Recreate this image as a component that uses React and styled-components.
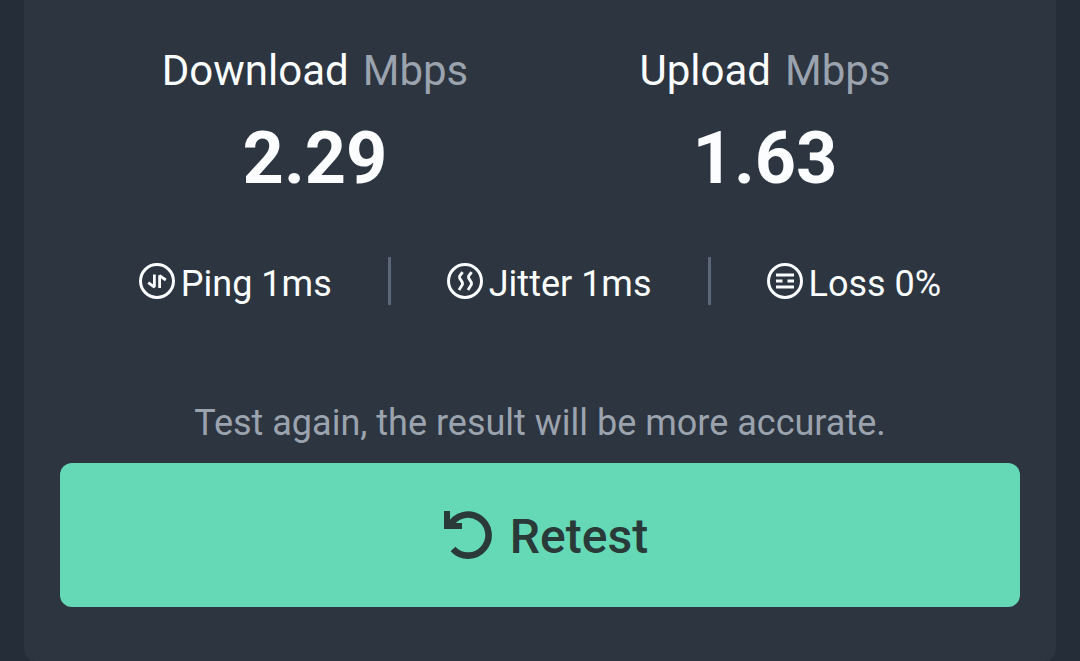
import React from "react";
import styled, { createGlobalStyle } from "styled-components";

const GlobalStyle = createGlobalStyle`
  *, *::before, *::after { box-sizing: border-box; }
  body {
    margin: 0;
    background: #252d39;
    color: #fbfdff;
    font-family: Roboto, "Liberation Sans", sans-serif;
  }
`;

const Page = styled.main`
  padding: 0 24px;
`;

const Card = styled.section`
  display: flex;
  flex-direction: column;
  padding: 46px 36px 54px;
  border-radius: 0 0 12px 12px;
  background: #2d3540;
`;

const Speeds = styled.div`
  display: grid;
  grid-template-columns: 1fr 1fr;
  padding: 0 30px;
`;

const Speed = styled.div`
  display: flex;
  flex-direction: column;
  align-items: center;
  gap: 13px;
`;

const SpeedLabel = styled.div`
  display: flex;
  gap: 14px;
  font-size: 42px;
  line-height: 50px;
  white-space: nowrap;
`;

const Unit = styled.span`
  color: #9ba3ae;
`;

const SpeedValue = styled.div`
  font-size: 72px;
  line-height: 100px;
  font-weight: 700;
`;

const Stats = styled.div`
  display: flex;
  justify-content: center;
  align-items: center;
  gap: 56px;
  margin-top: 47px;
`;

const Stat = styled.div`
  display: flex;
  align-items: center;
  gap: 6px;
  white-space: nowrap;
`;

const StatText = styled.span`
  padding-top: 6px;
  font-size: 36px;
  line-height: 44px;
`;

const Divider = styled.span`
  width: 3px;
  height: 48px;
  background: #5a6578;
`;

const StatIcon = styled.svg`
  flex: none;
  width: 36px;
  height: 36px;
  fill: none;
  stroke: currentColor;
  stroke-width: 3;
`;

const Hint = styled.p`
  margin: 95px 0 18px;
  color: #9ba3ae;
  font-size: 36px;
  line-height: 44px;
  text-align: center;
`;

const RetestButton = styled.button`
  display: flex;
  justify-content: center;
  align-items: center;
  gap: 18px;
  width: 100%;
  height: 144px;
  padding: 0 0 0 12px;
  border: 0;
  border-radius: 12px;
  background: #65d8b6;
  color: #293a39;
  font-family: inherit;
  font-size: 48px;
  font-weight: 500;
  line-height: 56px;
  cursor: pointer;
`;

const RetestText = styled.span`
  padding-top: 4px;
`;

const RetestIcon = styled.svg`
  flex: none;
  width: 48px;
  height: 48px;
`;

function PingIcon() {
  return (
    <StatIcon viewBox="0 0 36 36" aria-hidden="true">
      <circle cx="18" cy="18" r="16.5" />
      <path
        strokeWidth="2.8"
        strokeLinejoin="bevel"
        d="M9.2 19.6L15.4 24V11.6M20.6 25V12.6L26.8 17"
      />
    </StatIcon>
  );
}

function JitterIcon() {
  return (
    <StatIcon viewBox="0 0 36 36" aria-hidden="true">
      <circle cx="18" cy="18" r="16.5" />
      <path
        strokeWidth="2.8"
        strokeLinejoin="round"
        d="M15.6 9.2L12.6 13.2V15L15.4 19.6V21.6L12 27M24.6 9.2L21.6 13.2V15L24.4 19.6V21.6L21 27"
      />
    </StatIcon>
  );
}

function LossIcon() {
  return (
    <StatIcon viewBox="0 0 36 36" aria-hidden="true">
      <circle cx="18" cy="18" r="16.5" />
      <path strokeWidth="2.8" d="M9 12H27M9 18H15.5M20.5 18H27M9 24H27" />
    </StatIcon>
  );
}

function SpeedBlock({ label, value }) {
  return (
    <Speed>
      <SpeedLabel>
        <span>{label}</span>
        <Unit>Mbps</Unit>
      </SpeedLabel>
      <SpeedValue>{value}</SpeedValue>
    </Speed>
  );
}

export default function App() {
  return (
    <>
      <GlobalStyle />
      <Page>
        <Card>
          <Speeds>
            <SpeedBlock label="Download" value="2.29" />
            <SpeedBlock label="Upload" value="1.63" />
          </Speeds>
          <Stats>
            <Stat>
              <PingIcon />
              <StatText>Ping 1ms</StatText>
            </Stat>
            <Divider />
            <Stat>
              <JitterIcon />
              <StatText>Jitter 1ms</StatText>
            </Stat>
            <Divider />
            <Stat>
              <LossIcon />
              <StatText>Loss 0%</StatText>
            </Stat>
          </Stats>
          <Hint>Test again, the result will be more accurate.</Hint>
          <RetestButton type="button">
            <RetestIcon viewBox="0 0 48 48" aria-hidden="true">
              <path
                d="M5.7 15A20.5 20.5 0 1 1 9 38"
                fill="none"
                stroke="currentColor"
                strokeWidth="6.6"
              />
              <path d="M0 0H6V12H18V18H0Z" fill="currentColor" />
            </RetestIcon>
            <RetestText>Retest</RetestText>
          </RetestButton>
        </Card>
      </Page>
    </>
  );
}
